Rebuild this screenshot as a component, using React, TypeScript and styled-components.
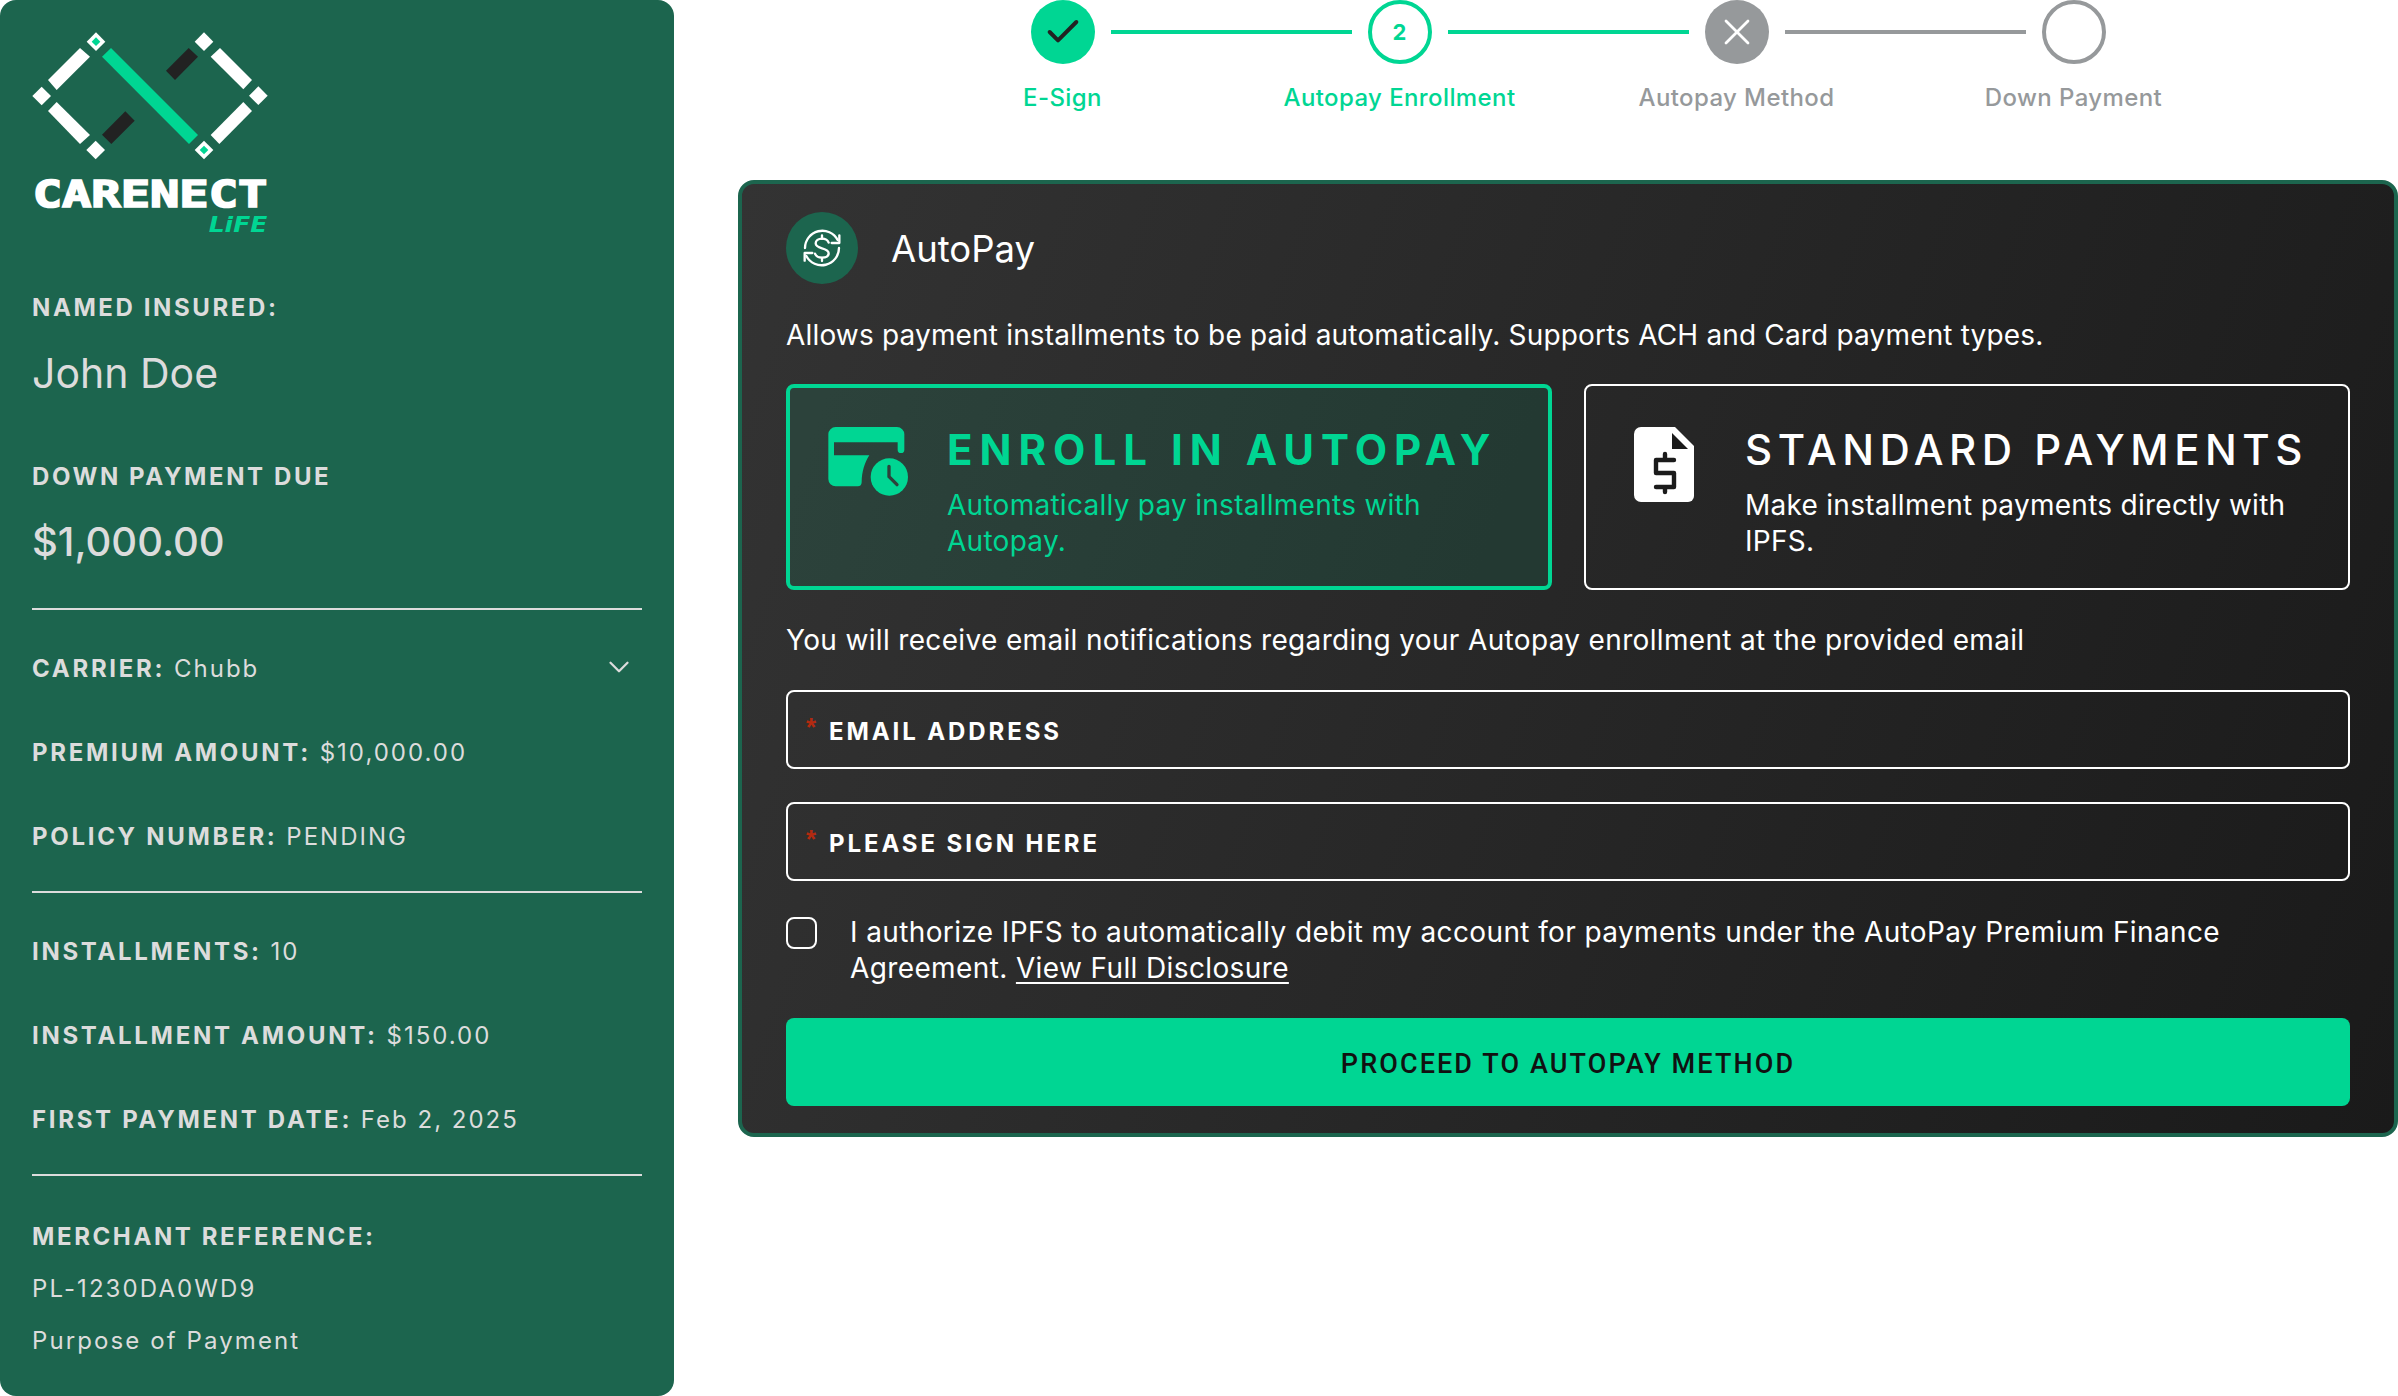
import { createGlobalStyle, styled } from 'styled-components'
import { Check, ChevronDown, X } from 'lucide-react'

const GlobalStyle = createGlobalStyle`
    html, body {
        margin: 0;
        padding: 0;
        background: #fff;
    }
    body {
        font-family: Inter, "Open Sans", "Liberation Sans", sans-serif;
        overflow: hidden;
    }
    * {
        box-sizing: border-box;
    }
`

const green = '#00d693'
const forest = '#1c654e'
const grey = '#96999b'

const Page = styled.div`
    display: grid;
    grid-template-columns: 674px 1fr;
    column-gap: 64px;
    width: 2398px;
    height: 1396px;
`

const Sidebar = styled.aside`
    background: ${forest};
    border-radius: 16px;
    padding: 32px;
    color: #dcdcdc;
`

const LogoBox = styled.svg`
    display: block;
    width: 236px;
    height: 204px;
    margin-bottom: 57px;
`

const Label = styled.div`
    font-size: 24px;
    line-height: 30px;
    font-weight: 700;
    letter-spacing: 2.6px;
`

const BigValue = styled.div<{ $weight?: number; $after: number }>`
    font-size: ${props => (props.$weight ? '40px' : '41px')};
    line-height: 50px;
    font-weight: ${props => props.$weight || 400};
    margin-top: 25px;
    margin-bottom: ${props => props.$after}px;
`

const Rule = styled.hr`
    border: 0;
    height: 2px;
    background: #dcdcdc;
    margin: 0;
`

const InfoGroup = styled.div`
    display: flex;
    flex-direction: column;
    gap: 54px;
    padding: 44px 0 39px;
`

const InfoRow = styled.div`
    display: flex;
    align-items: center;
    justify-content: space-between;
    height: 30px;
    font-size: 24px;
    line-height: 30px;
    letter-spacing: 2px;
`

const InfoKey = styled.strong`
    font-weight: 700;
    letter-spacing: 2.7px;
`

const Chevron = styled(ChevronDown)`
    margin-right: 6px;
    transform: translateY(-2px);
`

const MerchantBlock = styled.div`
    display: flex;
    flex-direction: column;
    gap: 22px;
    padding-top: 46px;
`

const PlainRow = styled.div`
    font-size: 24px;
    line-height: 30px;
    letter-spacing: 2.1px;
`

const Main = styled.main`
    min-width: 0;
`

const Stepper = styled.div`
    display: grid;
    grid-template-columns: repeat(4, 337px);
    justify-content: center;
    margin-bottom: 66px;
`

const Step = styled.div`
    position: relative;
    display: flex;
    flex-direction: column;
    align-items: center;
    gap: 18px;
`

const Connector = styled.span<{ $done?: boolean }>`
    position: absolute;
    left: calc(50% + 48px);
    top: 30px;
    width: 241px;
    height: 4px;
    background: ${props => (props.$done ? green : grey)};
`

const Dot = styled.div<{ $kind: 'done' | 'active' | 'error' | 'idle' }>`
    display: flex;
    align-items: center;
    justify-content: center;
    width: 64px;
    height: 64px;
    border-radius: 50%;
    font-size: 22px;
    font-weight: 700;
    color: ${green};
    background: ${props => (props.$kind === 'done' ? green : props.$kind === 'error' ? grey : '#fff')};
    border: ${props =>
        props.$kind === 'active' ? `4px solid ${green}` : props.$kind === 'idle' ? `4px solid ${grey}` : 'none'};
`

const StepLabel = styled.div<{ $on?: boolean }>`
    font-size: 24px;
    line-height: 32px;
    font-weight: 500;
    letter-spacing: 0.4px;
    color: ${props => (props.$on ? green : grey)};
`

const Panel = styled.section`
    height: 957px;
    border: 4px solid ${forest};
    border-radius: 16px;
    background: linear-gradient(110deg, #333333 0%, #1a1a1a 100%);
    padding: 28px 44px 0;
    color: #fff;
`

const PanelHead = styled.div`
    display: flex;
    align-items: center;
    gap: 33px;
    margin-bottom: 33px;
`

const RoundIcon = styled.div`
    width: 72px;
    height: 72px;
    border-radius: 50%;
    background: ${forest};
`

const PanelTitle = styled.h1`
    margin: 2px 0 0;
    font-size: 36.5px;
    line-height: 46px;
    font-weight: 400;
`

const Copy = styled.p<{ $after?: number; $track: number }>`
    margin: 0 0 ${props => props.$after || 0}px;
    font-size: 28px;
    line-height: 36px;
    letter-spacing: ${props => props.$track}px;
`

const Options = styled.div`
    display: grid;
    grid-template-columns: 1fr 1fr;
    gap: 32px;
    margin: 31px 0 32px;
`

const Option = styled.div<{ $on?: boolean }>`
    display: flex;
    height: 206px;
    padding: ${props => (props.$on ? '36px 32px 0 39px' : '38px 26px 0 48px')};
    border: ${props => (props.$on ? `4px solid ${green}` : '2px solid #fff')};
    border-radius: 8px;
    background: ${props => (props.$on ? 'rgba(0, 214, 147, 0.1)' : 'transparent')};
    color: ${props => (props.$on ? green : '#fff')};
`

const OptionIcon = styled.svg<{ $wide?: boolean }>`
    flex: none;
    width: ${props => (props.$wide ? '105px' : '90px')};
    height: 95px;
    margin: ${props => (props.$wide ? '-11px 27px 0 -14px' : '-8px 35px 0 -14px')};
`

const OptionTitle = styled.div<{ $on?: boolean }>`
    font-size: 42px;
    line-height: 52px;
    font-weight: ${props => (props.$on ? 700 : 500)};
    letter-spacing: ${props => (props.$on ? '7px' : '5.5px')};
    white-space: nowrap;
`

const OptionText = styled.div`
    font-size: 28px;
    line-height: 36px;
    letter-spacing: 0.27px;
    margin-top: 11px;
`

const Field = styled.div`
    display: flex;
    align-items: center;
    height: 79px;
    margin-bottom: 33px;
    padding-left: 18px;
    border: 2px solid #fff;
    border-radius: 8px;
`

const Star = styled.span`
    width: 23px;
    height: 26px;
    margin-top: -6px;
    font-family: "Liberation Sans", sans-serif;
    font-size: 26px;
    line-height: 26px;
    font-weight: 700;
    color: #b32a10;
`

const FieldLabel = styled.span`
    margin-top: 4px;
    font-size: 24px;
    font-weight: 700;
    letter-spacing: 2.9px;
`

const Consent = styled.div`
    display: flex;
    gap: 33px;
    margin-bottom: 32px;
`

const Box = styled.span`
    flex: none;
    width: 31px;
    height: 32px;
    margin-top: 3px;
    border: 2px solid #fff;
    border-radius: 8px;
`

const DisclosureLink = styled.a`
    color: #fff;
    text-decoration: underline;
    text-underline-offset: 4px;
    text-decoration-thickness: 2px;
`

const ProceedButton = styled.button`
    display: block;
    width: 100%;
    height: 88px;
    padding-top: 5px;
    border: 0;
    border-radius: 8px;
    background: ${green};
    color: #111;
    font-family: Roboto, sans-serif;
    font-size: 27px;
    font-weight: 500;
    letter-spacing: 2.1px;
`

const Logo = () => (
    <LogoBox viewBox="96 96 708 612">
        <g fill="#fff">
            <polygon points="288,97 316,125 288,153 260,125" />
            <polygon points="612,97 640,125 612,153 584,125" />
            <polygon points="125,260 153,288 125,316 97,288" />
            <polygon points="775,259 803,287 775,315 747,287" />
            <polygon points="287,422 315,450 287,478 259,450" />
            <polygon points="612,422 640,450 612,478 584,450" />
            <polygon points="240,144 270,170 170,270 144,240" />
            <polygon points="170,306 270,405 240,432 144,333" />
            <polygon points="660,144 756,240 730,268 632,170" />
            <polygon points="730,306 756,333 658,432 632,405" />
        </g>
        <g fill={green}>
            <polygon points="333,144 594,405 567,432 306,170" />
            <polygon points="288,112 301,125 288,138 275,125" />
            <polygon points="612,437 625,450 612,463 599,450" />
        </g>
        <g fill="#222">
            <polygon points="566,144 594,170 525,240 498,212" />
            <polygon points="376,334 404,362 334,432 306,404" />
        </g>
        <text
            x="98"
            y="620"
            fill="#fff"
            stroke="#fff"
            strokeWidth="5"
            fontFamily="'DejaVu Sans Mono', monospace"
            fontWeight="700"
            fontSize="112"
            textLength="704"
            lengthAdjust="spacingAndGlyphs"
        >
            CARENECT
        </text>
        <text
            x="626"
            y="695"
            fill={green}
            fontFamily="'DejaVu Sans', sans-serif"
            fontWeight="700"
            fontStyle="italic"
            fontSize="62"
            textLength="176"
            lengthAdjust="spacingAndGlyphs"
        >
            LiFE
        </text>
    </LogoBox>
)

const SyncDollar = () => (
    <svg viewBox="18 20 216 216" width="72" height="72" fill="none" stroke="#fff" strokeWidth="7" strokeLinecap="round" strokeLinejoin="round">
        <path d="M75 128a52 52 0 0 1 98-24" />
        <path d="M177 128a52 52 0 0 1-98 24" />
        <path d="M178 90v23h-23" />
        <path d="M74 166v-23h23" />
        <path d="M146 112c-3-8-10-12-20-12-11 0-19 6-19 14 0 9 8 12 19 15s20 6 20 15c0 8-8 13-20 13-10 0-18-4-21-12" />
        <path d="M126 90v10M126 158v9" />
    </svg>
)

const CardClock = () => (
    <OptionIcon $wide viewBox="0 0 315 285">
        <path
            fill={green}
            d="M62 42h184a22 22 0 0 1 22 22v46a10 10 0 0 1-20 0V88H57v39h106c-14 22-23 50-23 80 0 8-4 13-12 13H62a22 22 0 0 1-22-22V64a22 22 0 0 1 22-22z"
        />
        <circle cx="223" cy="192" r="56" fill={green} />
        <path d="M222 160v31l24 24" fill="none" stroke="#2d423b" strokeWidth="10" strokeLinecap="round" strokeLinejoin="round" />
    </OptionIcon>
)

const DollarDoc = () => (
    <OptionIcon viewBox="0 0 90 95">
        <path fill="#fff" d="M21 11h34l19 19v50a6 6 0 0 1-6 6H21a7 7 0 0 1-7-7V18a7 7 0 0 1 7-7z" />
        <path fill="#1b1b1b" d="M52 17v16h16z" />
        <path
            d="M54 44H36v13h18v14H36M45 38v6M45 71v5"
            fill="none"
            stroke="#1b1b1b"
            strokeWidth="4.4"
            strokeLinecap="round"
            strokeLinejoin="round"
        />
    </OptionIcon>
)

const App = () => {
    return <>
        <GlobalStyle />
        <Page>
            <Sidebar>
                <Logo />
                <Label>NAMED INSURED:</Label>
                <BigValue $after={64}>John Doe</BigValue>
                <Label>DOWN PAYMENT DUE</Label>
                <BigValue $weight={500} $after={41}>$1,000.00</BigValue>
                <Rule />
                <InfoGroup>
                    <InfoRow>
                        <span><InfoKey>CARRIER:</InfoKey> Chubb</span>
                        <Chevron size={34} strokeWidth={1.6} />
                    </InfoRow>
                    <InfoRow><span><InfoKey>PREMIUM AMOUNT:</InfoKey> $10,000.00</span></InfoRow>
                    <InfoRow><span><InfoKey>POLICY NUMBER:</InfoKey> PENDING</span></InfoRow>
                </InfoGroup>
                <Rule />
                <InfoGroup>
                    <InfoRow><span><InfoKey>INSTALLMENTS:</InfoKey> 10</span></InfoRow>
                    <InfoRow><span><InfoKey>INSTALLMENT AMOUNT:</InfoKey> $150.00</span></InfoRow>
                    <InfoRow><span><InfoKey>FIRST PAYMENT DATE:</InfoKey> Feb 2, 2025</span></InfoRow>
                </InfoGroup>
                <Rule />
                <MerchantBlock>
                    <Label>MERCHANT REFERENCE:</Label>
                    <PlainRow>PL-1230DA0WD9</PlainRow>
                    <PlainRow>Purpose of Payment</PlainRow>
                </MerchantBlock>
            </Sidebar>

            <Main>
                <Stepper>
                    <Step>
                        <Dot $kind="done"><Check size={40} color="#222" strokeWidth={2.4} /></Dot>
                        <Connector $done />
                        <StepLabel $on>E-Sign</StepLabel>
                    </Step>
                    <Step>
                        <Dot $kind="active">2</Dot>
                        <Connector $done />
                        <StepLabel $on>Autopay Enrollment</StepLabel>
                    </Step>
                    <Step>
                        <Dot $kind="error"><X size={44} color="#fff" strokeWidth={1.5} /></Dot>
                        <Connector />
                        <StepLabel>Autopay Method</StepLabel>
                    </Step>
                    <Step>
                        <Dot $kind="idle" />
                        <StepLabel>Down Payment</StepLabel>
                    </Step>
                </Stepper>

                <Panel>
                    <PanelHead>
                        <RoundIcon><SyncDollar /></RoundIcon>
                        <PanelTitle>AutoPay</PanelTitle>
                    </PanelHead>
                    <Copy $track={0.17}>Allows payment installments to be paid automatically. Supports ACH and Card payment types.</Copy>
                    <Options>
                        <Option $on>
                            <CardClock />
                            <div>
                                <OptionTitle $on>ENROLL IN AUTOPAY</OptionTitle>
                                <OptionText>Automatically pay installments with Autopay.</OptionText>
                            </div>
                        </Option>
                        <Option>
                            <DollarDoc />
                            <div>
                                <OptionTitle>STANDARD PAYMENTS</OptionTitle>
                                <OptionText>Make installment payments directly with IPFS.</OptionText>
                            </div>
                        </Option>
                    </Options>
                    <Copy $after={32} $track={0.34}>You will receive email notifications regarding your Autopay enrollment at the provided email</Copy>
                    <Field><Star>*</Star><FieldLabel>EMAIL ADDRESS</FieldLabel></Field>
                    <Field><Star>*</Star><FieldLabel>PLEASE SIGN HERE</FieldLabel></Field>
                    <Consent>
                        <Box />
                        <Copy $track={0.38}>
                            I authorize IPFS to automatically debit my account for payments under the AutoPay Premium Finance Agreement. <DisclosureLink href="#">View Full Disclosure</DisclosureLink>
                        </Copy>
                    </Consent>
                    <ProceedButton>PROCEED TO AUTOPAY METHOD</ProceedButton>
                </Panel>
            </Main>
        </Page>
    </>
}

export default App
